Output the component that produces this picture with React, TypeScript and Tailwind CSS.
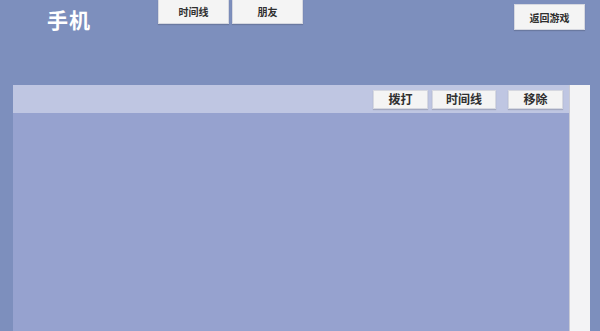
export default function App() {
  const btn =
    "bg-[#f4f4f4] border border-[#d6d8e0] text-[#2f2f2f] font-bold flex items-center justify-center shadow-[0_1px_1px_rgba(0,0,0,0.15)]"

  return (
    <div
      className="w-[600px] h-[331px] bg-[#7d8fbd] flex flex-col overflow-hidden"
      style={{ fontFamily: '"Noto Sans CJK SC", "Noto Sans", sans-serif' }}
    >
      {/* top bar */}
      <div className="h-[85px] flex items-start">
        <div className="w-[158px] pl-[47px] pt-[6px] text-white font-bold text-[21px] leading-[26px] tracking-[1px]">
          手机
        </div>
        <div className="flex gap-[3px]">
          <div className={btn + " text-[10px] w-[71px] h-[24px] border-t-0"}>时间线</div>
          <div className={btn + " text-[10px] w-[71px] h-[24px] border-t-0"}>朋友</div>
        </div>
        <div className={btn + " text-[10px] ml-auto mr-[15px] mt-[4px] w-[71px] h-[26px]"}>返回游戏</div>
      </div>

      {/* panel */}
      <div className="flex-1 flex pl-[13px]">
        <div className="w-[556px] flex flex-col">
          <div className="h-[28px] bg-[#bfc6e2] flex items-center justify-end pr-[6px]">
            <div className={btn + " text-[12px] w-[55px] h-[19px]"}>拨打</div>
            <div className={btn + " text-[12px] w-[64px] h-[19px] ml-[4px]"}>时间线</div>
            <div className={btn + " text-[12px] w-[55px] h-[19px] ml-[12px]"}>移除</div>
          </div>
          <div className="flex-1 bg-[#96a2cf]" />
        </div>
        <div className="w-[21px] bg-[#f3f3f5] border-l border-[#c9cbd6]" />
      </div>
    </div>
  )
}
